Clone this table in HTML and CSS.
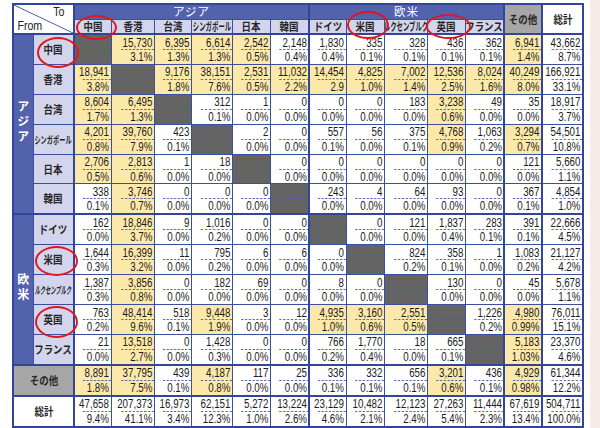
FILE: index.html
```html
<!DOCTYPE html>
<html lang="ja">
<head>
<meta charset="utf-8">
<title>国・地域別 取引マトリクス</title>
<link rel="stylesheet" href="styles.css">
</head>
<body>
<div class="page">
  <div class="sheet">
    <table class="matrix">
      <colgroup><col class="c-grp"><col class="c-lbl"></colgroup>
      <colgroup class="blk"><col class="w37"><col class="w43"><col class="w37"><col class="w41"><col class="w38"><col class="w39"></colgroup>
      <colgroup class="blk"><col class="w37"><col class="w38"><col class="w43"><col class="w38"><col class="w39"></colgroup>
      <colgroup class="blk"><col class="w38"></colgroup>
      <colgroup class="blk"><col class="w41"></colgroup>
      <thead>
        <tr class="h1">
          <th class="ft" colspan="2" rowspan="2"><div class="to">To</div><div class="from">From</div></th>
          <th class="gh" colspan="6">アジア</th>
          <th class="gh" colspan="5">欧米</th>
          <th class="oth-h" rowspan="2"><span class="jp">その他</span></th>
          <th class="tot-h" rowspan="2"><span class="jp">総計</span></th>
        </tr>
        <tr class="h2">
          <th class="ch circ ch-cn"><span class="jp">中国</span></th>
          <th class="ch"><span class="jp">香港</span></th>
          <th class="ch"><span class="jp">台湾</span></th>
          <th class="ch"><span class="jp sq">シンガポール</span></th>
          <th class="ch"><span class="jp">日本</span></th>
          <th class="ch"><span class="jp">韓国</span></th>
          <th class="ch"><span class="jp">ドイツ</span></th>
          <th class="ch circ ch-us"><span class="jp">米国</span></th>
          <th class="ch clip"><span class="jp sq">ルクセンブルク</span></th>
          <th class="ch circ ch-uk"><span class="jp">英国</span></th>
          <th class="ch"><span class="jp">フランス</span></th>
        </tr>
      </thead>
      <tbody>
        <tr>
          <th class="grp" rowspan="6"><span class="vt">アジア</span></th>
          <th class="lbl circ rl-cn"><span class="jp">中国</span></th>
          <td class="d"><span class="n"></span><span class="p"></span></td>
          <td class="y"><span class="n">15,730</span><span class="p">3.1%</span></td>
          <td class="y"><span class="n">6,395</span><span class="p">1.3%</span></td>
          <td class="y"><span class="n">6,614</span><span class="p">1.3%</span></td>
          <td class="y"><span class="n">2,542</span><span class="p">0.5%</span></td>
          <td><span class="n">2,148</span><span class="p">0.4%</span></td>
          <td><span class="n">1,830</span><span class="p">0.4%</span></td>
          <td><span class="n">335</span><span class="p">0.1%</span></td>
          <td><span class="n">328</span><span class="p">0.1%</span></td>
          <td><span class="n">436</span><span class="p">0.1%</span></td>
          <td><span class="n">362</span><span class="p">0.1%</span></td>
          <td class="y"><span class="n">6,941</span><span class="p">1.4%</span></td>
          <td><span class="n">43,662</span><span class="p">8.7%</span></td>
        </tr>
        <tr>
          <th class="lbl"><span class="jp">香港</span></th>
          <td class="y"><span class="n">18,941</span><span class="p">3.8%</span></td>
          <td class="d"><span class="n"></span><span class="p"></span></td>
          <td class="y"><span class="n">9,176</span><span class="p">1.8%</span></td>
          <td class="y"><span class="n">38,151</span><span class="p">7.6%</span></td>
          <td class="y"><span class="n">2,531</span><span class="p">0.5%</span></td>
          <td class="y"><span class="n">11,032</span><span class="p">2.2%</span></td>
          <td class="y"><span class="n">14,454</span><span class="p">2.9</span></td>
          <td class="y"><span class="n">4,825</span><span class="p">1.0%</span></td>
          <td class="y"><span class="n">7,002</span><span class="p">1.4%</span></td>
          <td class="y"><span class="n">12,536</span><span class="p">2.5%</span></td>
          <td class="y"><span class="n">8,024</span><span class="p">1.6%</span></td>
          <td class="y"><span class="n">40,249</span><span class="p">8.0%</span></td>
          <td><span class="n">166,921</span><span class="p">33.1%</span></td>
        </tr>
        <tr>
          <th class="lbl"><span class="jp">台湾</span></th>
          <td class="y"><span class="n">8,604</span><span class="p">1.7%</span></td>
          <td class="y"><span class="n">6,495</span><span class="p">1.3%</span></td>
          <td class="d"><span class="n"></span><span class="p"></span></td>
          <td><span class="n">312</span><span class="p">0.1%</span></td>
          <td><span class="n">1</span><span class="p">0.0%</span></td>
          <td><span class="n">0</span><span class="p">0.0%</span></td>
          <td><span class="n">0</span><span class="p">0.0%</span></td>
          <td><span class="n">0</span><span class="p">0.0%</span></td>
          <td><span class="n">183</span><span class="p">0.0%</span></td>
          <td class="y"><span class="n">3,238</span><span class="p">0.6%</span></td>
          <td><span class="n">49</span><span class="p">0.0%</span></td>
          <td><span class="n">35</span><span class="p">0.0%</span></td>
          <td><span class="n">18,917</span><span class="p">3.7%</span></td>
        </tr>
        <tr>
          <th class="lbl"><span class="jp sq sm">シンガポール</span></th>
          <td class="y"><span class="n">4,201</span><span class="p">0.8%</span></td>
          <td class="y"><span class="n">39,760</span><span class="p">7.9%</span></td>
          <td><span class="n">423</span><span class="p">0.1%</span></td>
          <td class="d"><span class="n"></span><span class="p"></span></td>
          <td><span class="n">2</span><span class="p">0.0%</span></td>
          <td><span class="n">0</span><span class="p">0.0%</span></td>
          <td><span class="n">557</span><span class="p">0.1%</span></td>
          <td><span class="n">56</span><span class="p">0.0%</span></td>
          <td><span class="n">375</span><span class="p">0.1%</span></td>
          <td class="y"><span class="n">4,768</span><span class="p">0.9%</span></td>
          <td><span class="n">1,063</span><span class="p">0.2%</span></td>
          <td class="y"><span class="n">3,294</span><span class="p">0.7%</span></td>
          <td><span class="n">54,501</span><span class="p">10.8%</span></td>
        </tr>
        <tr>
          <th class="lbl"><span class="jp">日本</span></th>
          <td class="y"><span class="n">2,706</span><span class="p">0.5%</span></td>
          <td class="y"><span class="n">2,813</span><span class="p">0.6%</span></td>
          <td><span class="n">1</span><span class="p">0.0%</span></td>
          <td><span class="n">18</span><span class="p">0.0%</span></td>
          <td class="d"><span class="n"></span><span class="p"></span></td>
          <td><span class="n">0</span><span class="p">0.0%</span></td>
          <td><span class="n">0</span><span class="p">0.0%</span></td>
          <td><span class="n">0</span><span class="p">0.0%</span></td>
          <td><span class="n">0</span><span class="p">0.0%</span></td>
          <td><span class="n">0</span><span class="p">0.0%</span></td>
          <td><span class="n">0</span><span class="p">0.0%</span></td>
          <td><span class="n">121</span><span class="p">0.0%</span></td>
          <td><span class="n">5,660</span><span class="p">1.1%</span></td>
        </tr>
        <tr>
          <th class="lbl"><span class="jp">韓国</span></th>
          <td><span class="n">338</span><span class="p">0.1%</span></td>
          <td class="y"><span class="n">3,746</span><span class="p">0.7%</span></td>
          <td><span class="n">0</span><span class="p">0.0%</span></td>
          <td><span class="n">0</span><span class="p">0.0%</span></td>
          <td><span class="n">0</span><span class="p">0.0%</span></td>
          <td class="d"><span class="n"></span><span class="p"></span></td>
          <td><span class="n">243</span><span class="p">0.0%</span></td>
          <td><span class="n">4</span><span class="p">0.0%</span></td>
          <td><span class="n">64</span><span class="p">0.0%</span></td>
          <td><span class="n">93</span><span class="p">0.0%</span></td>
          <td><span class="n">0</span><span class="p">0.0%</span></td>
          <td><span class="n">367</span><span class="p">0.1%</span></td>
          <td><span class="n">4,854</span><span class="p">1.0%</span></td>
        </tr>
      </tbody>
      <tbody>
        <tr>
          <th class="grp" rowspan="5"><span class="vt">欧米</span></th>
          <th class="lbl"><span class="jp">ドイツ</span></th>
          <td><span class="n">162</span><span class="p">0.0%</span></td>
          <td class="y"><span class="n">18,846</span><span class="p">3.7%</span></td>
          <td><span class="n">9</span><span class="p">0.0%</span></td>
          <td><span class="n">1,016</span><span class="p">0.2%</span></td>
          <td><span class="n">0</span><span class="p">0.0%</span></td>
          <td><span class="n">0</span><span class="p">0.0%</span></td>
          <td class="d"><span class="n"></span><span class="p"></span></td>
          <td><span class="n">0</span><span class="p">0.0%</span></td>
          <td><span class="n">121</span><span class="p">0.0%</span></td>
          <td><span class="n">1,837</span><span class="p">0.4%</span></td>
          <td><span class="n">283</span><span class="p">0.1%</span></td>
          <td><span class="n">391</span><span class="p">0.1%</span></td>
          <td><span class="n">22,666</span><span class="p">4.5%</span></td>
        </tr>
        <tr>
          <th class="lbl circ rl-us"><span class="jp">米国</span></th>
          <td><span class="n">1,644</span><span class="p">0.3%</span></td>
          <td class="y"><span class="n">16,399</span><span class="p">3.2%</span></td>
          <td><span class="n">11</span><span class="p">0.0%</span></td>
          <td><span class="n">795</span><span class="p">0.2%</span></td>
          <td><span class="n">6</span><span class="p">0.0%</span></td>
          <td><span class="n">6</span><span class="p">0.0%</span></td>
          <td><span class="n">0</span><span class="p">0.0%</span></td>
          <td class="d"><span class="n"></span><span class="p"></span></td>
          <td><span class="n">824</span><span class="p">0.2%</span></td>
          <td><span class="n">358</span><span class="p">0.1%</span></td>
          <td><span class="n">1</span><span class="p">0.0%</span></td>
          <td><span class="n">1,083</span><span class="p">0.2%</span></td>
          <td><span class="n">21,127</span><span class="p">4.2%</span></td>
        </tr>
        <tr>
          <th class="lbl"><span class="jp sq xs">ルクセンブルク</span></th>
          <td><span class="n">1,387</span><span class="p">0.3%</span></td>
          <td class="y"><span class="n">3,856</span><span class="p">0.8%</span></td>
          <td><span class="n">0</span><span class="p">0.0%</span></td>
          <td><span class="n">182</span><span class="p">0.0%</span></td>
          <td><span class="n">69</span><span class="p">0.0%</span></td>
          <td><span class="n">0</span><span class="p">0.0%</span></td>
          <td><span class="n">8</span><span class="p">0.0%</span></td>
          <td><span class="n">0</span><span class="p">0.0%</span></td>
          <td class="d"><span class="n"></span><span class="p"></span></td>
          <td><span class="n">130</span><span class="p">0.0%</span></td>
          <td><span class="n">0</span><span class="p">0.0%</span></td>
          <td><span class="n">45</span><span class="p">0.0%</span></td>
          <td><span class="n">5,678</span><span class="p">1.1%</span></td>
        </tr>
        <tr>
          <th class="lbl circ rl-uk"><span class="jp">英国</span></th>
          <td><span class="n">763</span><span class="p">0.2%</span></td>
          <td class="y"><span class="n">48,414</span><span class="p">9.6%</span></td>
          <td><span class="n">518</span><span class="p">0.1%</span></td>
          <td class="y"><span class="n">9,448</span><span class="p">1.9%</span></td>
          <td><span class="n">3</span><span class="p">0.0%</span></td>
          <td><span class="n">12</span><span class="p">0.0%</span></td>
          <td class="y"><span class="n">4,935</span><span class="p">1.0%</span></td>
          <td class="y"><span class="n">3,160</span><span class="p">0.6%</span></td>
          <td class="y"><span class="n">2,551</span><span class="p">0.5%</span></td>
          <td class="d"><span class="n"></span><span class="p"></span></td>
          <td><span class="n">1,226</span><span class="p">0.2%</span></td>
          <td class="y"><span class="n">4,980</span><span class="p">0.99%</span></td>
          <td><span class="n">76,011</span><span class="p">15.1%</span></td>
        </tr>
        <tr>
          <th class="lbl"><span class="jp">フランス</span></th>
          <td><span class="n">21</span><span class="p">0.0%</span></td>
          <td class="y"><span class="n">13,518</span><span class="p">2.7%</span></td>
          <td><span class="n">0</span><span class="p">0.0%</span></td>
          <td><span class="n">1,428</span><span class="p">0.3%</span></td>
          <td><span class="n">0</span><span class="p">0.0%</span></td>
          <td><span class="n">0</span><span class="p">0.0%</span></td>
          <td><span class="n">766</span><span class="p">0.2%</span></td>
          <td><span class="n">1,770</span><span class="p">0.4%</span></td>
          <td><span class="n">18</span><span class="p">0.0%</span></td>
          <td><span class="n">665</span><span class="p">0.1%</span></td>
          <td class="d"><span class="n"></span><span class="p"></span></td>
          <td class="y"><span class="n">5,183</span><span class="p">1.03%</span></td>
          <td><span class="n">23,370</span><span class="p">4.6%</span></td>
        </tr>
      </tbody>
      <tbody>
        <tr>
          <th class="oth-l" colspan="2"><span class="jp">その他</span></th>
          <td class="y"><span class="n">8,891</span><span class="p">1.8%</span></td>
          <td class="y"><span class="n">37,795</span><span class="p">7.5%</span></td>
          <td><span class="n">439</span><span class="p">0.1%</span></td>
          <td class="y"><span class="n">4,187</span><span class="p">0.8%</span></td>
          <td><span class="n">117</span><span class="p">0.0%</span></td>
          <td><span class="n">25</span><span class="p">0.0%</span></td>
          <td><span class="n">336</span><span class="p">0.1%</span></td>
          <td><span class="n">332</span><span class="p">0.1%</span></td>
          <td><span class="n">656</span><span class="p">0.1%</span></td>
          <td class="y"><span class="n">3,201</span><span class="p">0.6%</span></td>
          <td><span class="n">436</span><span class="p">0.1%</span></td>
          <td class="y"><span class="n">4,929</span><span class="p">0.98%</span></td>
          <td><span class="n">61,344</span><span class="p">12.2%</span></td>
        </tr>
      </tbody>
      <tbody>
        <tr>
          <th class="tot-l" colspan="2"><span class="jp">総計</span></th>
          <td><span class="n">47,658</span><span class="p">9.4%</span></td>
          <td><span class="n">207,373</span><span class="p">41.1%</span></td>
          <td><span class="n">16,973</span><span class="p">3.4%</span></td>
          <td><span class="n">62,151</span><span class="p">12.3%</span></td>
          <td><span class="n">5,272</span><span class="p">1.0%</span></td>
          <td><span class="n">13,224</span><span class="p">2.6%</span></td>
          <td><span class="n">23,129</span><span class="p">4.6%</span></td>
          <td><span class="n">10,482</span><span class="p">2.1%</span></td>
          <td><span class="n">12,123</span><span class="p">2.4%</span></td>
          <td><span class="n">27,263</span><span class="p">5.4%</span></td>
          <td><span class="n">11,444</span><span class="p">2.3%</span></td>
          <td><span class="n">67,619</span><span class="p">13.4%</span></td>
          <td><span class="n">504,711</span><span class="p">100.0%</span></td>
        </tr>
      </tbody>
    </table>
  </div>
  <div class="margin"></div>
</div>
</body>
</html>
```

FILE: styles.css
```css
* { box-sizing: border-box; }
html, body { margin: 0; padding: 0; background: #ffffff; }
body {
  font-family: "Liberation Sans", Arial, sans-serif;
  color: #1c1c1c;
}
.page { display: flex; width: 600px; height: 428px; overflow: hidden; }
.sheet { flex: 0 0 590px; padding: 3px 0 0 12px; }
.margin { flex: 1 1 auto; background: #f5ebe8; }

.matrix {
  border-collapse: collapse;
  table-layout: fixed;
  width: 570px;
  border: 2px solid #33459a;
}
.matrix th, .matrix td {
  padding: 0;
  border: 1px solid #3c4e9f;
  vertical-align: middle;
}
.matrix colgroup.blk { border-left: 2px solid #33459a; border-right: 2px solid #33459a; }
.matrix thead { border-bottom: 2px solid #33459a; }
.matrix tbody { border-top: 2px solid #33459a; }

.c-grp { width: 20px; }
.c-lbl { width: 41px; }
.w37 { width: 37px; }
.w38 { width: 38px; }
.w39 { width: 39px; }
.w41 { width: 41px; }
.w43 { width: 43px; }

/* header */
.h1 th, .h2 th { height: 14.5px; }
.ft {
  background: linear-gradient(to top right, #ffffff calc(50% - 0.8px), #3c4e9f, #ffffff calc(50% + 0.8px));
  font-size: 12.5px;
  font-weight: normal;
  vertical-align: top;
}
.ft .to { text-align: right; padding-right: 10px; line-height: 13px; padding-top: 1px; transform: scaleX(0.85); transform-origin: right center; }
.ft .from { text-align: left; padding-left: 4px; line-height: 14px; transform: scaleX(0.85); transform-origin: left center; }
.gh {
  background: #5262ad;
  color: #ffffff;
  font-family: "Noto Sans CJK JP", sans-serif;
  font-weight: normal;
  font-size: 11.5px;
  line-height: 13px;
  letter-spacing: 1px;
}
.ch { background: #d3d5ec; position: relative; }
.oth-h { background: #a6a6a6; }
.tot-h { background: #ffffff; }
.clip { overflow: hidden; }

.jp {
  display: block;
  width: 90px;
  margin-left: calc(50% - 45px);
  text-align: center;
  white-space: nowrap;
  font-family: "Noto Sans CJK JP", sans-serif;
  font-weight: bold;
  font-size: 11px;
  line-height: 13px;
  color: #262626;
  transform: scaleX(0.86);
}
.jp.sq { transform: scaleX(0.58); }
.jp.sm { font-size: 10px; transform: scaleX(0.62); }
.jp.xs { font-size: 10px; font-style: italic; transform: scaleX(0.52); }

/* row labels */
.grp { background: #5262ad; }
.vt {
  display: inline-block;
  writing-mode: vertical-rl;
  font-family: "Noto Sans CJK JP", sans-serif;
  font-size: 12px;
  letter-spacing: 3px;
  color: #ffffff;
}
.lbl { background: #d3d5ec; position: relative; }
.oth-l { background: #a6a6a6; }
.tot-l { background: #ffffff; }

/* data cells */
.matrix td { background: #ffffff; }
.matrix td.y { background: #fce9a9; }
.matrix td.d { background: #646464; }
.n, .p {
  display: flex;
  justify-content: flex-end;
  align-items: center;
  padding-right: 2px;
  font-size: 12.5px;
  white-space: nowrap;
  transform: scaleX(0.78);
  transform-origin: right center;
}
.n { height: 15px; padding-top: 1px; border-bottom: 1px dashed #4658b4; }
.p { height: 13.9px; }

/* red markers */
.circ::after {
  content: "";
  position: absolute;
  border: 2.5px solid #e3161d;
  border-radius: 50%;
  z-index: 2;
  pointer-events: none;
}
.ch-cn::after { left: 1px; top: -5px; width: 37px; height: 21px; }
.ch-us::after { left: 0; top: -9px; width: 38px; height: 24px; }
.ch-uk::after { left: -2px; top: -6px; width: 41px; height: 21px; }
.rl-cn::after { left: 3px; top: 2px; width: 38px; height: 27px; }
.rl-us::after { left: 1px; top: 1px; width: 39px; height: 26px; }
.rl-uk::after { left: 1px; top: 1px; width: 39px; height: 28px; }
```
